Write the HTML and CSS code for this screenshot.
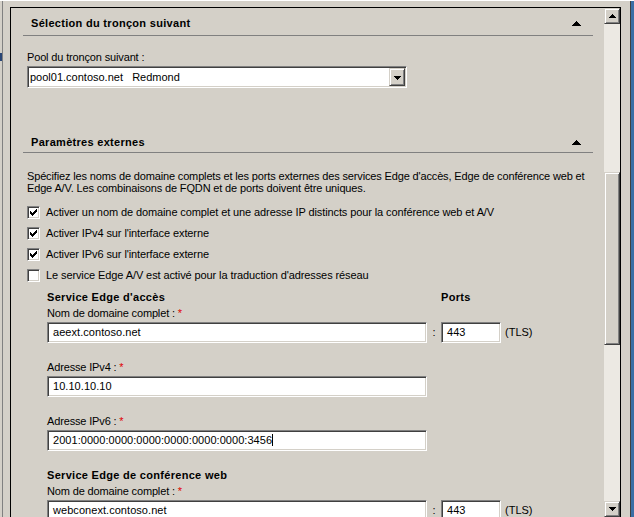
FILE: index.html
```html
<!DOCTYPE html>
<html lang="fr">
<head>
<meta charset="utf-8">
<title>Paramètres Edge</title>
<link rel="stylesheet" href="styles.css">
</head>
<body>
<div class="screen">
  <div class="left-frame"><div class="left-line"><span class="left-blue"></span></div></div>
  <div class="panel">
    <div class="content">
      <div class="section-head head-first">
        <span>Sélection du tronçon suivant</span>
        <svg class="collapse" width="9" height="5" viewBox="0 0 9 5"><path d="M4 0h1v1h-1zM3 1h3v1h-3zM2 2h5v1h-5zM1 3h7v1h-7zM0 4h9v1h-9z"/></svg>
      </div>
      <div class="label pool-label">Pool du tronçon suivant :</div>
      <div class="combo">
        <span class="combo-text">pool01.contoso.net&nbsp;&nbsp; Redmond</span>
        <span class="btn3d combo-btn"><svg width="7" height="4" viewBox="0 0 7 4"><path d="M0 0h7v1h-7zM1 1h5v1h-5zM2 2h3v1h-3zM3 3h1v1h-1z"/></svg></span>
      </div>

      <div class="section-head head-second">
        <span>Paramètres externes</span>
        <svg class="collapse" width="9" height="5" viewBox="0 0 9 5"><path d="M4 0h1v1h-1zM3 1h3v1h-3zM2 2h5v1h-5zM1 3h7v1h-7zM0 4h9v1h-9z"/></svg>
      </div>
      <p class="desc">Spécifiez les noms de domaine complets et les ports externes des services Edge d'accès, Edge de conférence web et<br>Edge A/V. Les combinaisons de FQDN et de ports doivent être uniques.</p>

      <ul class="checks">
        <li class="check-row"><span class="checkbox"><svg width="11" height="11" viewBox="0 0 11 11"><path d="M2 4h1v3h-1zM3 5h1v3h-1zM4 6h1v3h-1zM5 5h1v3h-1zM6 4h1v3h-1zM7 3h1v3h-1zM8 2h1v3h-1z"/></svg></span><span>Activer un nom de domaine complet et une adresse IP distincts pour la conférence web et A/V</span></li>
        <li class="check-row"><span class="checkbox"><svg width="11" height="11" viewBox="0 0 11 11"><path d="M2 4h1v3h-1zM3 5h1v3h-1zM4 6h1v3h-1zM5 5h1v3h-1zM6 4h1v3h-1zM7 3h1v3h-1zM8 2h1v3h-1z"/></svg></span><span>Activer IPv4 sur l'interface externe</span></li>
        <li class="check-row"><span class="checkbox"><svg width="11" height="11" viewBox="0 0 11 11"><path d="M2 4h1v3h-1zM3 5h1v3h-1zM4 6h1v3h-1zM5 5h1v3h-1zM6 4h1v3h-1zM7 3h1v3h-1zM8 2h1v3h-1z"/></svg></span><span>Activer IPv6 sur l'interface externe</span></li>
        <li class="check-row"><span class="checkbox"></span><span>Le service Edge A/V est activé pour la traduction d'adresses réseau</span></li>
      </ul>

      <div class="service">
        <div class="service-head"><span class="service-title">Service Edge d'accès</span><span class="service-title">Ports</span></div>
        <div class="field">
          <div class="label">Nom de domaine complet : <span class="req">*</span></div>
          <div class="field-row">
            <div class="textbox wide">aeext.contoso.net</div>
            <span class="colon">:</span>
            <div class="textbox port">443</div>
            <span class="proto">(TLS)</span>
          </div>
        </div>
        <div class="field">
          <div class="label">Adresse IPv4 : <span class="req">*</span></div>
          <div class="field-row"><div class="textbox wide">10.10.10.10</div></div>
        </div>
        <div class="field">
          <div class="label">Adresse IPv6 : <span class="req">*</span></div>
          <div class="field-row"><div class="textbox wide"><span class="caret">2001:0000:0000:0000:0000:0000:0000:3456</span></div></div>
        </div>
      </div>

      <div class="service">
        <div class="service-head"><span class="service-title">Service Edge de conférence web</span></div>
        <div class="field">
          <div class="label">Nom de domaine complet : <span class="req">*</span></div>
          <div class="field-row">
            <div class="textbox wide">webconext.contoso.net</div>
            <span class="colon">:</span>
            <div class="textbox port">443</div>
            <span class="proto">(TLS)</span>
          </div>
        </div>
      </div>
    </div>

    <div class="scrollbar">
      <span class="btn3d scroll-btn"><svg width="7" height="4" viewBox="0 0 7 4"><path d="M3 0h1v1h-1zM2 1h3v1h-3zM1 2h5v1h-5zM0 3h7v1h-7z"/></svg></span>
      <span class="track track-top"></span>
      <span class="btn3d thumb"></span>
      <span class="track track-bottom"></span>
      <span class="btn3d scroll-btn"><svg width="7" height="4" viewBox="0 0 7 4"><path d="M0 0h7v1h-7zM1 1h5v1h-5zM2 2h3v1h-3zM3 3h1v1h-1z"/></svg></span>
    </div>
  </div>
  <div class="right-frame"></div>
  <div class="right-edge"></div>
</div>
</body>
</html>
```

FILE: styles.css
```css
html, body {
  margin: 0;
  padding: 0;
  background: #d4d0c8;
  overflow: hidden;
}

body {
  font-family: "Liberation Sans", Arial, sans-serif;
  font-size: 11px;
  color: #000;
}

svg {
  display: block;
  fill: #000;
  shape-rendering: crispEdges;
}

.screen {
  display: flex;
  height: 516px;
  border-top: 1px solid #ffffff;
  overflow: hidden;
}

/* left window frame */
.left-frame {
  width: 10px;
  flex: none;
}

.left-line {
  width: 3px;
  height: 100%;
  box-sizing: border-box;
  border-right: 1px solid #808080;
  padding-top: 52px;
}

.left-blue {
  display: block;
  width: 2px;
  height: 8px;
  background: #2a4676;
}

/* right window frame */
.right-frame {
  width: 9px;
  flex: none;
}

.right-edge {
  width: 3px;
  flex: none;
  border-left: 1px solid #404040;
  background: #3a6ea5;
}

/* main panel */
.panel {
  width: 611px;
  height: 510px;
  margin-top: 6px;
  flex: none;
  box-sizing: border-box;
  border: 1px solid #000;
  border-bottom: none;
  display: flex;
  overflow: hidden;
}

.content {
  flex: 1;
  min-width: 0;
  overflow: hidden;
}

/* section headers */
.section-head {
  display: flex;
  align-items: center;
  justify-content: space-between;
  margin: 0 11px 0 12px;
  padding: 0 12px 0 8px;
  line-height: 13px;
  font-weight: bold;
  letter-spacing: 0.3px;
  border-bottom: 1px solid #808080;
}

.head-first {
  margin-top: 9px;
  padding-bottom: 5px;
}

.head-second {
  margin-top: 48px;
  padding-bottom: 3px;
}

.label {
  line-height: 13px;
  white-space: nowrap;
  letter-spacing: -0.15px;
}

.pool-label {
  margin: 15px 0 0 16px;
}

.req {
  color: #e00000;
  letter-spacing: 0;
}

/* sunken fields */
.combo,
.textbox,
.checkbox {
  box-sizing: border-box;
  background: #fff;
  border: 1px solid;
  border-color: #808080 #ffffff #ffffff #808080;
  box-shadow: inset 1px 1px 0 #404040, inset -1px -1px 0 #d4d0c8;
}

.combo {
  display: flex;
  width: 380px;
  height: 22px;
  margin: 2px 0 0 16px;
  padding: 1px;
}

.combo-text {
  flex: 1;
  padding: 1px 0 0 1px;
  line-height: 17px;
  white-space: pre;
}

.btn3d {
  box-sizing: border-box;
  background: #d4d0c8;
  border: 1px solid;
  border-color: #d4d0c8 #404040 #404040 #d4d0c8;
  box-shadow: inset 1px 1px 0 #ffffff, inset -1px -1px 0 #808080;
}

.combo-btn {
  width: 16px;
  height: 18px;
  display: flex;
  align-items: center;
  justify-content: center;
  padding-top: 1px;
}

/* description */
.desc {
  margin: 17px 0 0 16px;
  line-height: 12px;
  white-space: nowrap;
  letter-spacing: -0.15px;
}

/* checkboxes */
.checks {
  list-style: none;
  margin: 12px 0 0 16px;
  padding: 0;
  display: flex;
  flex-direction: column;
  gap: 8px;
}

.check-row {
  display: flex;
  align-items: center;
  height: 13px;
  line-height: 13px;
  white-space: nowrap;
  letter-spacing: -0.1px;
}

.checkbox {
  width: 13px;
  height: 13px;
  flex: none;
  margin-right: 6px;
}

/* service blocks */
.service {
  margin: 9px 0 0 36px;
}

.service + .service {
  margin-top: 18px;
}

.service-head {
  display: flex;
  line-height: 13px;
  font-weight: bold;
  letter-spacing: 0.3px;
  margin-bottom: 3px;
}

.service-title:first-child {
  width: 394px;
}

.field + .field {
  margin-top: 18px;
}

.field-row {
  display: flex;
  margin-top: 2px;
  line-height: 21px;
  height: 21px;
}

.textbox {
  height: 21px;
  padding: 1px 4px 1px 5px;
  line-height: 17px;
  white-space: nowrap;
  letter-spacing: 0.05px;
}

.wide {
  width: 380px;
}

.port {
  width: 60px;
}

.colon {
  width: 14px;
  text-align: center;
}

.proto {
  margin-left: 4px;
}

.caret {
  border-right: 1px solid #000;
}

/* scrollbar */
.scrollbar {
  width: 16px;
  flex: none;
  display: flex;
  flex-direction: column;
  background: #ece9e3;
}

.scroll-btn {
  height: 16px;
  flex: none;
  display: flex;
  align-items: center;
  justify-content: center;
}

.track-top {
  height: 148px;
  flex: none;
}

.thumb {
  height: 173px;
  flex: none;
}

.track-bottom {
  flex: 1;
}
```
